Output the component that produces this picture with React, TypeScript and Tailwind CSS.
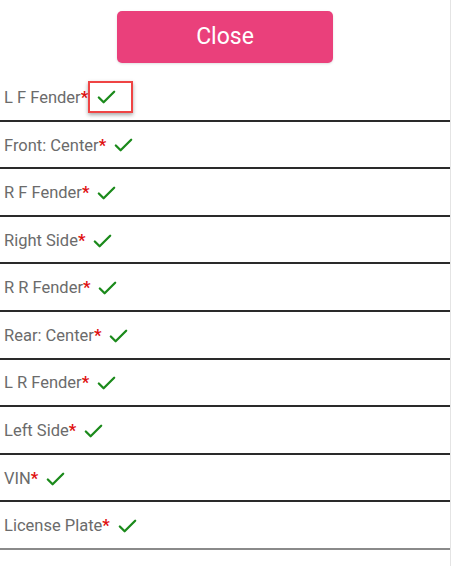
import { Check } from 'lucide-react';

const items = [
  'L F Fender',
  'Front: Center',
  'R F Fender',
  'Right Side',
  'R R Fender',
  'Rear: Center',
  'L R Fender',
  'Left Side',
  'VIN',
  'License Plate',
];

export default function App() {
  return (
    <div
      className="w-[451px] h-[566px] overflow-hidden bg-white border-r border-[#e4e4e4]"
      style={{ fontFamily: 'Roboto, "Liberation Sans", sans-serif' }}
    >
      {/* Close button */}
      <div className="h-[74px] flex justify-center pt-[11px]">
        <button className="w-[216px] h-[52px] rounded-[5px] bg-[#ea407b] text-white text-[23px] shadow-sm">
          Close
        </button>
      </div>

      {/* Checklist */}
      {items.map((label, i) => (
        <div
          key={label}
          className={`h-[47.6px] flex items-center pl-[4px] pt-[3px] border-b-2 ${
            i === items.length - 1 ? 'border-[#8a8a8a]' : 'border-[#2a2a2a]'
          }`}
        >
          <span className="text-[16.5px] text-[#6b6b6b]">{label}</span>
          <span className="text-[16.5px] font-bold text-[#e01010]">*</span>
          {i === 0 ? (
            <span className="w-[45px] h-[32px] -mt-[2px] flex items-center pl-[5px] border-2 border-[#ef4444] shadow-[0_2px_4px_rgba(0,0,0,0.35)]">
              <Check className="w-[23px] h-[23px] text-[#1b8a1b]" strokeWidth={2.4} />
            </span>
          ) : (
            <Check className="ml-[6px] w-[23px] h-[23px] text-[#1b8a1b]" strokeWidth={2.4} />
          )}
        </div>
      ))}
    </div>
  );
}
